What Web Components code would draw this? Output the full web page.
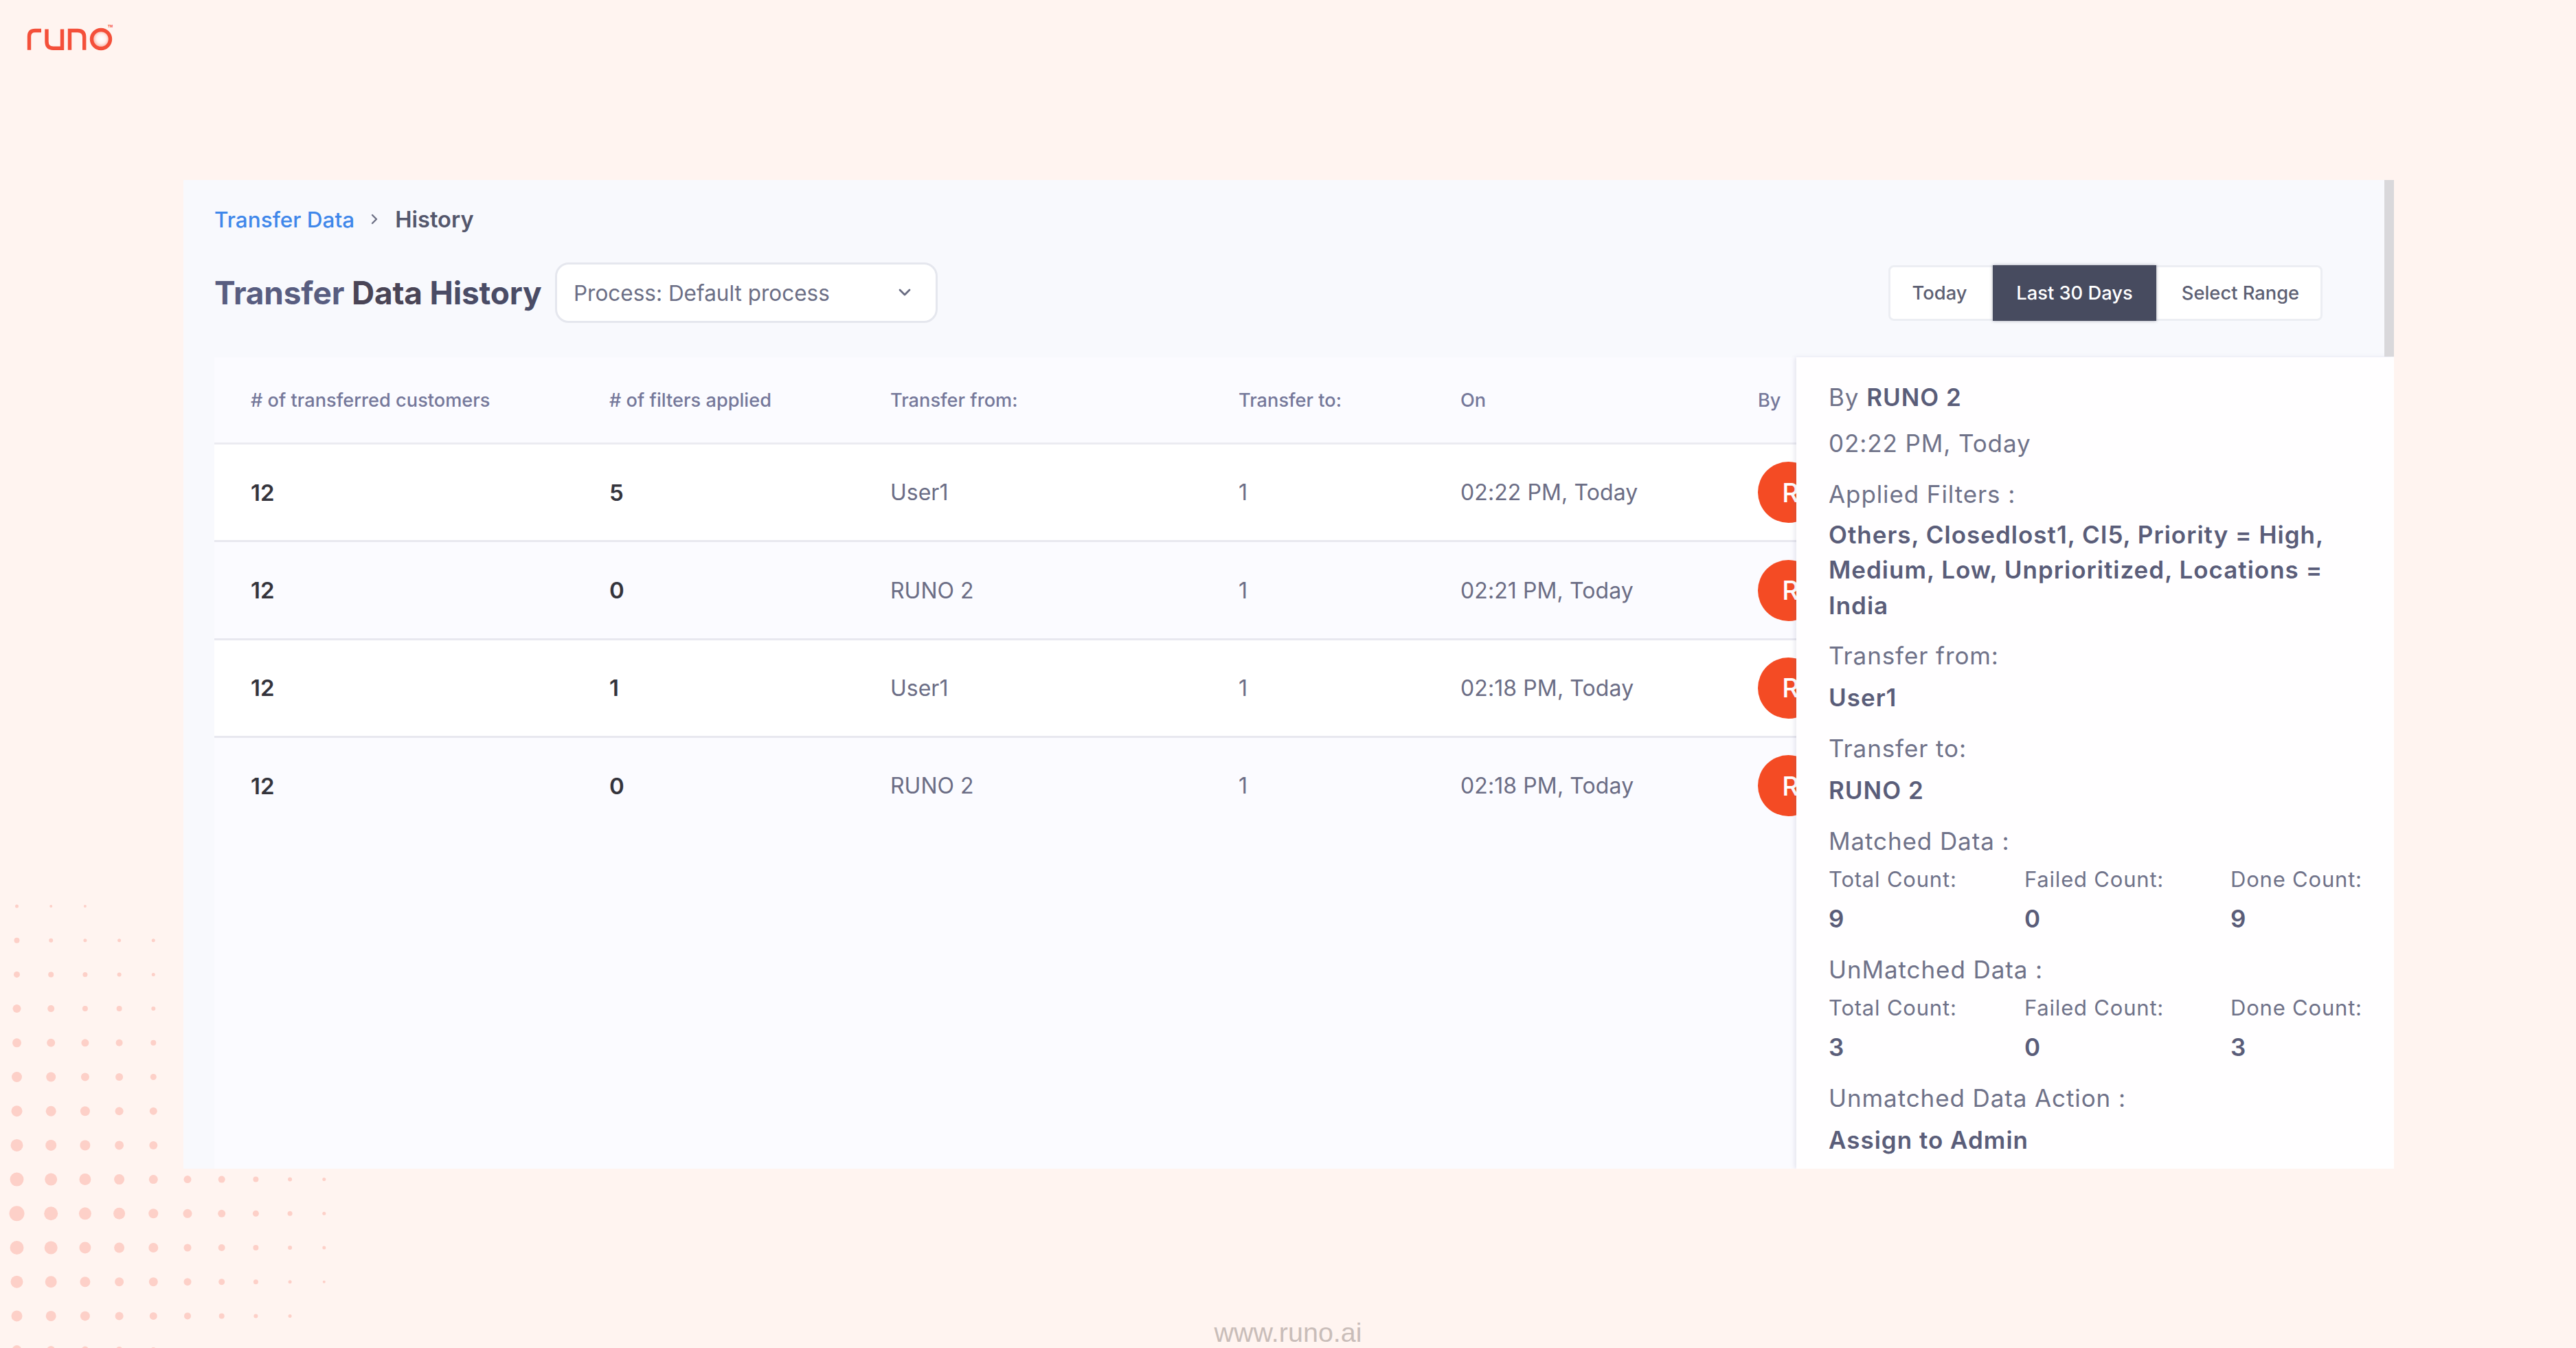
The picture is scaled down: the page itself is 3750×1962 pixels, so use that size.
<!DOCTYPE html>
<html lang="en">
<head>
<meta charset="utf-8">
<title>Transfer Data History</title>
<style>
  html, body { margin: 0; padding: 0; background: #fff4f0; }
  body { font-family: Inter, "Liberation Sans", sans-serif; }
</style>
</head>
<body>
<runo-page>
  <dot-field slot="bg"></dot-field>
  <runo-logo slot="logo"></runo-logo>
  <transfer-panel>
    <bread-crumb slot="crumb" link="Transfer Data" current="History"></bread-crumb>
    <span slot="title"><span style="color:#585d80">Transfer</span> <span style="color:#4a4556">Data</span> <span style="color:#4a4c66">History</span></span>
    <process-select slot="select">Process: Default process</process-select>
    <range-toggle slot="range">
      <range-option>Today</range-option>
      <range-option active>Last 30 Days</range-option>
      <range-option>Select Range</range-option>
    </range-toggle>
    <history-table slot="table">
      <history-row a="12" b="5" c="User1" d="1" e="02:22 PM, Today" odd></history-row>
      <history-row a="12" b="0" c="RUNO 2" d="1" e="02:21 PM, Today"></history-row>
      <history-row a="12" b="1" c="User1" d="1" e="02:18 PM, Today" odd></history-row>
      <history-row a="12" b="0" c="RUNO 2" d="1" e="02:18 PM, Today" last></history-row>
    </history-table>
    <detail-drawer slot="drawer"></detail-drawer>
  </transfer-panel>
  <site-foot slot="foot">www.runo.ai</site-foot>
</runo-page>

<script>
function def(name, css, html) {
  customElements.define(name, class extends HTMLElement {
    constructor() {
      super();
      const root = this.attachShadow({ mode: 'open' });
      const body = typeof html === 'function' ? html(this) : html;
      root.innerHTML = '<style>' + css + '</style>' + body;
    }
  });
}

def('runo-page', `
  :host { display: flex; flex-direction: column; position: relative; width: 3750px; height: 1962px;
    overflow: hidden; background: #fff4f0; font-family: Inter, "Liberation Sans", sans-serif; }
  .logo { flex: 0 0 262px; display: block; }
  .main { display: block; position: relative; flex: 0 0 1439px; margin-left: 267px; width: 3218px; }
  .foot { flex: 1 1 auto; display: block; }
`, `
  <slot name="bg"></slot>
  <div class="logo"><slot name="logo"></slot></div>
  <div class="main"><slot></slot></div>
  <div class="foot"><slot name="foot"></slot></div>
`);

def('dot-field', `
  :host { position: absolute; left: 0; top: 1290px; width: 520px; height: 672px; display: block; }
  svg { display: block; }
`, (() => {
  const table = [
    [5,4,4],
    [8,6,5,5,5],
    [9,8,7,6,5],
    [12,10,8,8,6],
    [13,12,11,10,8],
    [15,14,12,11,9],
    [16,15,14,12,11],
    [18,16,15,13,12],
    [20,18,17,15,13,11,10,8,6,5],
    [22,20,18,17,14,13,11,9,7,5],
    [20,19,17,15,14,11,10,8,6,5],
    [18,17,15,13,13,11,9,7,5,4],
    [16,15,14,12,11,10,8,6,5],
    [14,12,11,10,8,6,4]
  ];
  let c = '';
  table.forEach((row, r) => row.forEach((d, i) => {
    c += '<circle cx="' + (24.5 + i * 49.7).toFixed(1) + '" cy="' + (29 + r * 49.7).toFixed(1) + '" r="' + (d / 2) + '"/>';
  }));
  return '<svg width="520" height="672" viewBox="0 0 520 672" fill="#fdd0c8" aria-hidden="true">' + c + '</svg>';
})());

def('runo-logo', `
  :host { display: block; width: 180px; height: 90px; }
  svg { display: block; }
  text { font-family: "Liberation Sans", sans-serif; font-size: 5px; font-weight: 700; fill: #f4533c; }
`, `
  <svg width="180" height="90" viewBox="0 0 180 90" fill="none" aria-label="runo">
    <defs>
      <radialGradient id="g" cx="0.52" cy="0.48" r="0.55">
        <stop offset="0" stop-color="#ffffff"/>
        <stop offset="0.45" stop-color="#fff2ee"/>
        <stop offset="0.85" stop-color="#f9b3a5"/>
        <stop offset="1" stop-color="#f4503a"/>
      </radialGradient>
    </defs>
    <g stroke="#f4503a" stroke-width="5.4">
      <path d="M42.5 72.7V53Q42.5 44.5 51 44.5H60"/>
      <path d="M68 42.5V60.5Q68 70.2 77.5 70.2H90.5V42.5"/>
      <path d="M101.5 72.7V44.5H113Q122.7 44.5 122.7 54V72.7"/>
      <circle cx="147" cy="57" r="13.5" fill="url(#g)"/>
    </g>
    <text x="157" y="40">TM</text>
  </svg>
`);

def('transfer-panel', `
  :host { display: flex; flex-direction: column; position: relative; width: 3218px; height: 1439px;
    background: #f8f9fd; overflow: hidden; }
  .top { flex: 0 0 258px; padding: 37px 104px 0 45px; box-sizing: border-box; }
  .row { display: flex; align-items: center; height: 88px; margin-top: 43px; }
  h1 { margin: 0; font-size: 46px; line-height: 60px; font-weight: 700; letter-spacing: -0.2px; white-space: nowrap; width: 477px; }
  .sel { margin-left: 19px; }
  .rng { margin-left: auto; }
  .bottom { flex: 1 1 auto; display: flex; min-height: 0; padding-left: 45px; }
  .bar { position: absolute; right: 0; top: 0; width: 14px; height: 257px; background: #d9d8db; }
`, `
  <div class="top">
    <slot name="crumb"></slot>
    <div class="row">
      <h1><slot name="title"></slot></h1>
      <div class="sel"><slot name="select"></slot></div>
      <div class="rng"><slot name="range"></slot></div>
    </div>
  </div>
  <div class="bottom">
    <slot name="table"></slot>
    <slot name="drawer"></slot>
  </div>
  <div class="bar"></div>
`);

def('bread-crumb', `
  :host { display: flex; align-items: center; height: 40px; font-size: 31.5px; font-weight: 500; }
  .a { color: #3f87ea; }
  .b { color: #54576c; font-weight: 600; font-size: 32.6px; }
  svg { margin: 0 24px 0 23px; display: block; }
`, el => `
  <span class="a">${el.getAttribute('link')}</span>
  <svg width="12" height="20" viewBox="0 0 12 20" fill="none" stroke="#6d7085" stroke-width="2.4" stroke-linecap="round" stroke-linejoin="round"><path d="M3 4l6 6-6 6"/></svg>
  <span class="b">${el.getAttribute('current')}</span>
`);

def('process-select', `
  :host { display: flex; align-items: center; justify-content: space-between; box-sizing: border-box;
    width: 557px; height: 88px; padding: 0 34px 0 24px; background: #fff; border: 3px solid #e5e7ee;
    border-radius: 20px; font-size: 31.5px; color: #6b6e85; }
  svg { display: block; }
`, `
  <span><slot></slot></span>
  <svg width="22" height="14" viewBox="0 0 22 14" fill="none" stroke="#676a80" stroke-width="2.8" stroke-linecap="round" stroke-linejoin="round"><path d="M4 3l7 7 7-7"/></svg>
`);

def('range-toggle', `
  :host { display: flex; box-sizing: border-box; width: 632px; height: 81px; background: #fff;
    border: 3px solid #eceef3; border-radius: 8px; }
`, `<slot></slot>`);

def('range-option', `
  :host { display: flex; align-items: center; justify-content: center; box-sizing: border-box; height: 81px;
    margin-top: -3px; font-size: 27.3px; font-weight: 500; color: #5d6073; flex: 0 0 auto; white-space: nowrap; }
  :host(:nth-child(1)) { width: 149px; padding-right: 6px; }
  :host(:nth-child(3)) { width: 243px; margin-left: 1px; }
  :host([active]) { width: 238px; background: #474b5f; color: #fff; box-shadow: 0 0 4px rgba(71,75,95,.5); }
`, `<slot></slot>`);

def('history-table', `
  :host { display: block; flex: 0 0 2303px; width: 2303px; background: #fbfbff; overflow: hidden; }
  .head { display: grid; grid-template-columns: 522px 409px 507px 323px 433px 1fr; box-sizing: border-box; height: 127px;
    padding-left: 53px; align-items: center; border-bottom: 3px solid #ebebf1;
    font-size: 27.2px; font-weight: 500; color: #75789a; white-space: nowrap; }
`, `
  <div class="head">
    <span># of transferred customers</span>
    <span># of filters applied</span>
    <span>Transfer from:</span>
    <span>Transfer to:</span>
    <span>On</span>
    <span>By</span>
  </div>
  <slot></slot>
`);

def('history-row', `
  :host { display: grid; grid-template-columns: 522px 409px 507px 323px 433px 1fr; box-sizing: border-box; height: 142.4px;
    padding-left: 53px; align-items: center; border-bottom: 3px solid #e8e8ef; background: transparent;
    font-size: 32px; color: #6b6d85; white-space: nowrap; }
  :host([odd]) { background: #fff; }
  :host([last]) { border-bottom-color: transparent; }
  .n { font-weight: 600; color: #34343c; font-size: 33px; }
  .t { letter-spacing: 0.1px; }
  .av { display: flex; align-items: center; justify-content: center; box-sizing: border-box; width: 89px; height: 89px;
    padding-left: 6px; border-radius: 50%; background: #f44b24; color: #fff; font-size: 38px; font-weight: 500; }
`, el => {
  const g = k => el.getAttribute(k);
  return `
  <span class="n">${g('a')}</span>
  <span class="n">${g('b')}</span>
  <span>${g('c')}</span>
  <span>${g('d')}</span>
  <span class="t">${g('e')}</span>
  <span class="av">R</span>`;
});

def('count-trio', `
  :host { display: grid; grid-template-columns: 285px 300px 1fr; }
  div { display: flex; flex-direction: column; }
  span { line-height: 46px; font-size: 31px; letter-spacing: 0.8px; color: #6f7289; white-space: nowrap; }
  b { line-height: 46px; margin-top: 11px; font-size: 35px; font-weight: 600; color: #5a5d79; }
`, el => {
  const [t, f, d] = el.getAttribute('v').split(',');
  return `<div><span>Total Count:</span><b>${t}</b></div>
          <div><span>Failed Count:</span><b>${f}</b></div>
          <div><span>Done Count:</span><b>${d}</b></div>`;
});

def('detail-drawer', `
  :host { display: block; flex: 0 0 870px; width: 870px; box-sizing: border-box; padding: 35px 0 0 47px;
    background: #fffeff; box-shadow: -3px 0 6px rgba(90,90,130,.12); position: relative; font-size: 35px;
    letter-spacing: 0.9px; color: #6f7289; overflow: hidden; }
  p { margin: 0; line-height: 46px; white-space: nowrap; }
  b { font-weight: 600; color: #5a5d79; letter-spacing: 1px; }
  .filters { line-height: 51.4px; white-space: normal; width: 760px; margin-top: 11px; font-weight: 600; color: #5a5d79; letter-spacing: 1px; }
  .sec { margin-top: 28px; }
  .val { margin-top: 15px; font-weight: 600; color: #5a5d79; letter-spacing: 1px; }
  count-trio { margin-top: 10px; }
`, `
  <p>By <b>RUNO 2</b></p>
  <p style="margin-top:21px">02:22 PM, Today</p>
  <p class="sec">Applied Filters :</p>
  <p class="filters">Others, Closedlost1, CI5, Priority = High, Medium, Low, Unprioritized, Locations = India</p>
  <p style="margin-top:24px">Transfer from:</p>
  <p class="val">User1</p>
  <p class="sec">Transfer to:</p>
  <p class="val">RUNO 2</p>
  <p class="sec">Matched Data :</p>
  <count-trio v="9,0,9"></count-trio>
  <p class="sec">UnMatched Data :</p>
  <count-trio v="3,0,3"></count-trio>
  <p class="sec">Unmatched Data Action :</p>
  <p class="val">Assign to Admin</p>
`);

def('site-foot', `
  :host { display: block; text-align: center; padding-top: 216px; font-family: "Liberation Sans", sans-serif;
    font-size: 39.5px; line-height: 44px; color: #c9bdb9; }
`, `<slot></slot>`);
</script>
</body>
</html>
